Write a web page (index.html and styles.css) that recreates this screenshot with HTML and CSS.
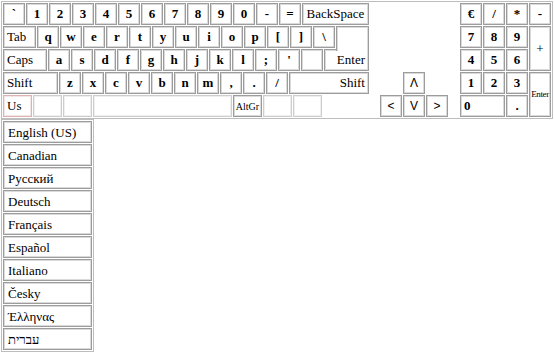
FILE: index.html
```html
<!DOCTYPE html>
<html lang="en">
  <head>
    <meta charset="UTF-8" />
    <meta name="viewport" content="width=device-width, initial-scale=1.0" />
    <title>Virtual Keyboard</title>
    <link rel="stylesheet" href="styles.css">
  </head>
  <body>
    <div class="keyboard">
      <div class="main">
        <div class="row">
          <div class="key">`</div>
          <div class="key">1</div>
          <div class="key">2</div>
          <div class="key">3</div>
          <div class="key">4</div>
          <div class="key">5</div>
          <div class="key">6</div>
          <div class="key">7</div>
          <div class="key">8</div>
          <div class="key">9</div>
          <div class="key">0</div>
          <div class="key">-</div>
          <div class="key">=</div>
          <div class="key fn backspace">BackSpace</div>
        </div>
        <div class="row">
          <div class="key fn lbl-left tab">Tab</div>
          <div class="key">q</div>
          <div class="key">w</div>
          <div class="key">e</div>
          <div class="key">r</div>
          <div class="key">t</div>
          <div class="key">y</div>
          <div class="key">u</div>
          <div class="key">i</div>
          <div class="key">o</div>
          <div class="key">p</div>
          <div class="key">[</div>
          <div class="key">]</div>
          <div class="key">\</div>
          <div class="key enter-top"></div>
        </div>
        <div class="row">
          <div class="key fn lbl-left caps">Caps</div>
          <div class="key">a</div>
          <div class="key">s</div>
          <div class="key">d</div>
          <div class="key">f</div>
          <div class="key">g</div>
          <div class="key">h</div>
          <div class="key">j</div>
          <div class="key">k</div>
          <div class="key">l</div>
          <div class="key">;</div>
          <div class="key">'</div>
          <div class="key"></div>
          <div class="key fn lbl-right enter">Enter</div>
        </div>
        <div class="row">
          <div class="key fn lbl-left shift-l">Shift</div>
          <div class="key">z</div>
          <div class="key">x</div>
          <div class="key">c</div>
          <div class="key">v</div>
          <div class="key">b</div>
          <div class="key">n</div>
          <div class="key">m</div>
          <div class="key">,</div>
          <div class="key">.</div>
          <div class="key">/</div>
          <div class="key fn lbl-right shift-r">Shift</div>
        </div>
        <div class="row">
          <div class="key fn lbl-left bottom us">Us</div>
          <div class="key bottom blank"></div>
          <div class="key bottom blank"></div>
          <div class="key bottom blank space"></div>
          <div class="key fn bottom altgr">AltGr</div>
          <div class="key bottom blank"></div>
          <div class="key bottom blank"></div>
        </div>
      </div>

      <div class="arrows">
        <div class="key arrow up">&Lambda;</div>
        <div class="key arrow left">&lt;</div>
        <div class="key arrow down">V</div>
        <div class="key arrow right">&gt;</div>
      </div>

      <div class="numpad">
        <div class="key">&euro;</div>
        <div class="key">/</div>
        <div class="key">*</div>
        <div class="key">-</div>
        <div class="key">7</div>
        <div class="key">8</div>
        <div class="key">9</div>
        <div class="key fn tall">+</div>
        <div class="key">4</div>
        <div class="key">5</div>
        <div class="key">6</div>
        <div class="key">1</div>
        <div class="key">2</div>
        <div class="key">3</div>
        <div class="key fn tall num-enter">Enter</div>
        <div class="key lbl-left zero">0</div>
        <div class="key">.</div>
      </div>
    </div>

    <div class="langs">
      <div class="lang">English (US)</div>
      <div class="lang">Canadian</div>
      <div class="lang">Русский</div>
      <div class="lang">Deutsch</div>
      <div class="lang">Français</div>
      <div class="lang">Español</div>
      <div class="lang">Italiano</div>
      <div class="lang">Česky</div>
      <div class="lang">Έλληνας</div>
      <div class="lang">עברית</div>
    </div>
  </body>
</html>
```

FILE: styles.css
```css
* {
  box-sizing: border-box;
}
body {
  margin: 0;
  padding: 1px;
  font-family: "Liberation Serif", "Times New Roman", serif;
  font-size: 13px;
  color: #000;
  background: #fff;
}
.keyboard {
  display: flex;
  width: 552px;
  border: 1px solid #bdbdbd;
  padding: 1px;
}
.main {
  display: flex;
  flex-direction: column;
  gap: 1px;
  width: 366px;
}
.row {
  display: flex;
  gap: 1px;
  height: 22px;
}
.key {
  flex: none;
  width: 22px;
  height: 22px;
  border: 1px solid #9c9c9c;
  box-shadow: inset 0 0 0 1px #dadada;
  background: #fff;
  font-weight: bold;
  line-height: 20px;
  text-align: center;
  white-space: nowrap;
  overflow: visible;
}
.fn {
  font-weight: normal;
}
.lbl-left {
  text-align: left;
  padding-left: 3px;
}
.lbl-right {
  text-align: right;
  padding-right: 3px;
}
.backspace {
  width: 67px;
}
.tab {
  width: 33px;
}
.enter-top {
  width: 33px;
  height: 25px;
  border-bottom: none;
  position: relative;
  z-index: 1;
  box-shadow: inset 1px 0 0 #dadada, inset -1px 0 0 #dadada, inset 0 1px 0 #dadada;
}
.caps {
  width: 44px;
}
.enter {
  width: 45px;
}
.shift-l {
  width: 55px;
}
.shift-r {
  width: 80px;
}
.bottom {
  width: 29px;
}
.blank {
  border-color: #cdcdcd;
  box-shadow: inset 0 0 0 1px #efefef;
}
.us {
  border-color: #dcb2b2;
  box-shadow: inset 0 0 0 1px #f3e6e6;
}
.space {
  width: 139px;
}
.altgr {
  font-size: 10px;
  padding-top: 1px;
}
.arrows {
  margin-left: 11px;
  display: grid;
  grid-template-columns: repeat(3, 22px);
  grid-template-rows: repeat(5, 22px);
  gap: 1px;
}
.arrow {
  font-family: "Liberation Sans", Arial, sans-serif;
  font-weight: normal;
  font-size: 12px;
}
.up {
  grid-column: 2;
  grid-row: 4;
}
.left {
  grid-column: 1;
  grid-row: 5;
}
.down {
  grid-column: 2;
  grid-row: 5;
}
.right {
  grid-column: 3;
  grid-row: 5;
}
.numpad {
  margin-left: 12px;
  display: grid;
  grid-template-columns: repeat(4, 22px);
  grid-template-rows: repeat(5, 22px);
  gap: 1px;
}
.tall {
  grid-row: span 2;
  height: 45px;
  line-height: 43px;
}
.num-enter {
  font-size: 9px;
  letter-spacing: -0.4px;
}
.zero {
  grid-column: span 2;
  width: 45px;
}
.langs {
  width: 93px;
  border: 1px solid #bdbdbd;
  padding: 1px;
  display: flex;
  flex-direction: column;
  gap: 1px;
}
.lang {
  height: 22px;
  border: 1px solid #9c9c9c;
  box-shadow: inset 0 0 0 1px #dadada;
  padding: 1px 0 0 4px;
  line-height: 20px;
  white-space: nowrap;
  direction: ltr;
  unicode-bidi: plaintext;
  text-align: left;
}
```
